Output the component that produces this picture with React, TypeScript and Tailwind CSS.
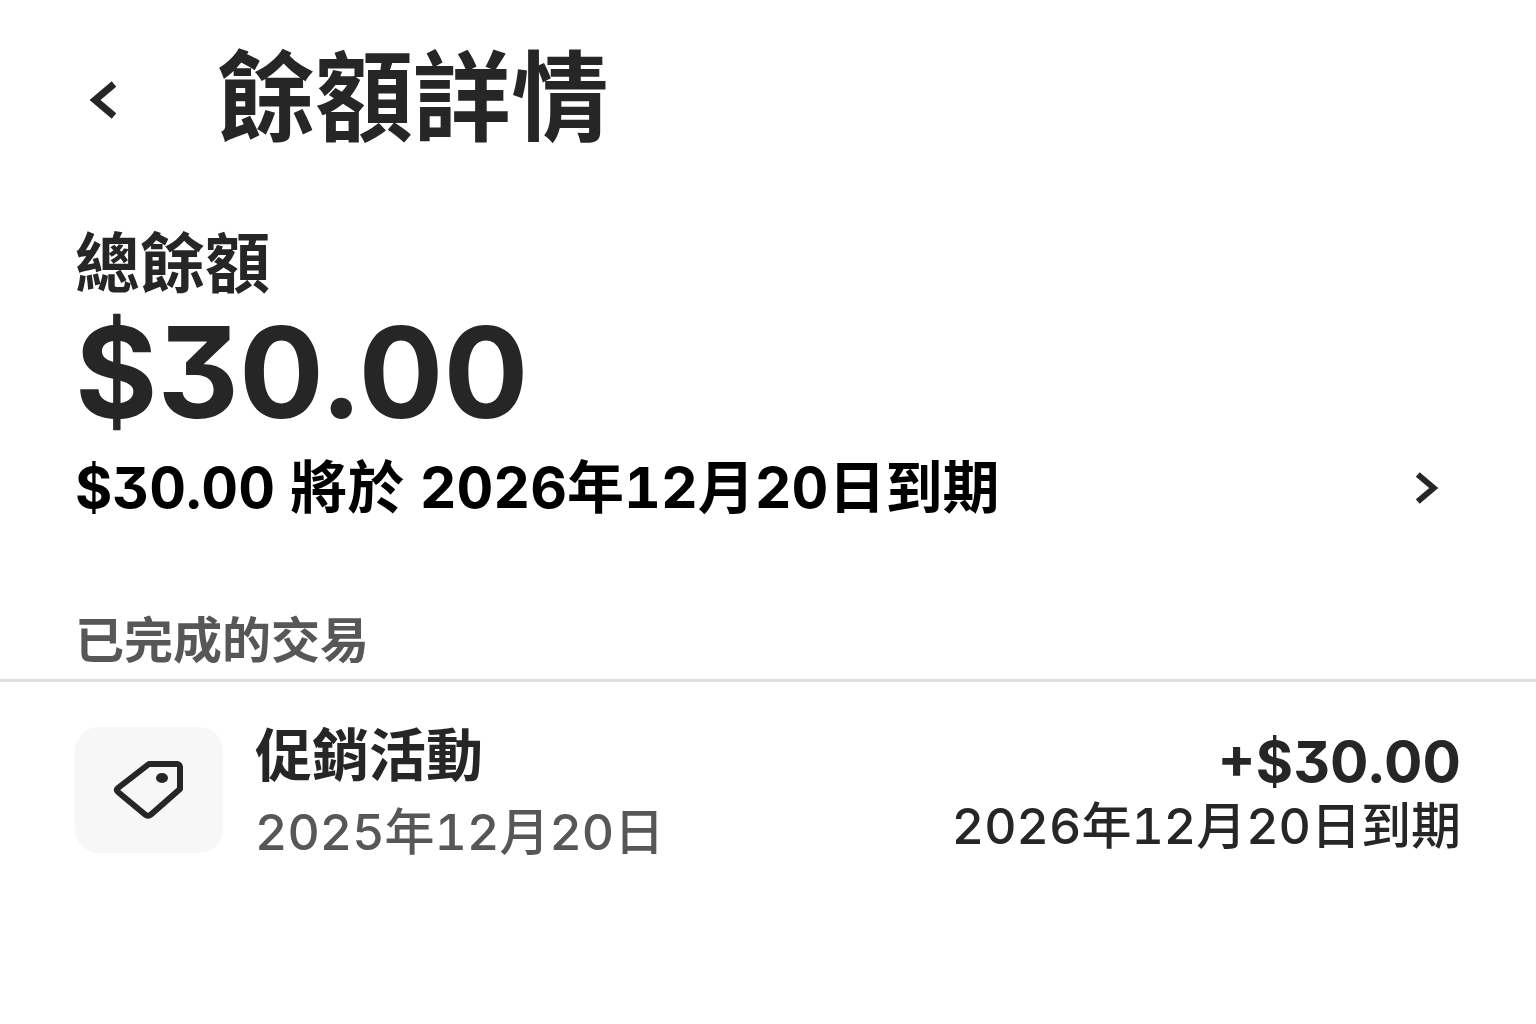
import type { ReactNode } from 'react';

interface Transaction {
  title: string;
  date: string;
  amount: string;
  expires: string;
}

const transactions: Transaction[] = [
  { title: '促銷活動', date: '2025年12月20日', amount: '+$30.00', expires: '2026年12月20日到期' },
];

function Chevron({ children, className }: { children: ReactNode; className: string }) {
  return (
    <svg
      viewBox="0 0 28 38"
      fill="none"
      stroke="#262626"
      strokeWidth="7"
      aria-hidden="true"
      className={className}
    >
      {children}
    </svg>
  );
}

function TagIcon() {
  return (
    <svg viewBox="0 0 72 60" fill="none" className="h-[60px] w-[72px]" aria-hidden="true">
      <path
        d="M36 4H64a3 3 0 0 1 3 3V29L38 54.500q-3 2.500-6 0L5 32q-2.500-2 0-4Z"
        stroke="#262626"
        strokeWidth="6"
        strokeLinejoin="round"
      />
      <ellipse cx="49" cy="18" rx="6" ry="5" fill="#262626" />
    </svg>
  );
}

function TransactionRow({ item }: { item: Transaction }) {
  return (
    <li className="flex items-center justify-between">
      <div className="flex items-center gap-8">
        <div className="flex h-[126px] w-[148px] items-center justify-center rounded-3xl bg-[#f7f7f7]">
          <TagIcon />
        </div>
        <div className="pt-2">
          <p className="text-[57px] leading-[76px] font-bold">{item.title}</p>
          <p className="text-[50px] leading-[76px] font-medium text-[#575757] [font-feature-settings:'tnum']">
            {item.date}
          </p>
        </div>
      </div>
      <div className="pt-2 text-right">
        <p className="text-[57px] leading-[64px] font-bold">{item.amount}</p>
        <p className="text-[50px] leading-[64px] font-medium [font-feature-settings:'tnum']">
          {item.expires}
        </p>
      </div>
    </li>
  );
}

export default function App() {
  return (
    <div
      lang="zh-Hant"
      className="min-h-screen bg-white font-['Inter','Noto_Sans_CJK_TC',sans-serif] text-[#262626] [font-feature-settings:'cv09']"
    >
      {/* Header */}
      <header className="flex items-center gap-[72px] px-[75px] pt-8">
        <button type="button" aria-label="返回" className="flex h-16 w-[70px] items-center pt-1 pl-3">
          <Chevron className="h-[38px] w-8">
            <path d="M25 3 6 19l19 16" />
          </Chevron>
        </button>
        <h1 className="text-[98px] leading-[132px] font-bold">餘額詳情</h1>
      </header>

      <main>
        {/* Balance */}
        <section className="px-[75px] pt-[62px]">
          <h2 className="text-[65px] leading-[76px] font-bold">總餘額</h2>
          <p className="text-[126px] leading-[140px] font-bold">$30.00</p>
          <button type="button" className="flex w-full items-center justify-between text-black">
            <span className="text-[57px] leading-[92px] font-bold [font-feature-settings:'cv09','tnum']">
              $30.00 將於 2026年12月20日到期
            </span>
            <Chevron className="mr-5 h-8 w-7">
              <path d="m3 3 19 16L3 35" />
            </Chevron>
          </button>
        </section>

        {/* Completed transactions */}
        <section>
          <h2 className="mt-[71px] border-b-[3px] border-[#dfdfdf] px-[75px] pb-[2px] text-[49px] leading-[72px] font-bold text-[#575757]">
            已完成的交易
          </h2>
          <ul className="px-[75px] pt-7">
            {transactions.map((item) => (
              <TransactionRow key={item.date} item={item} />
            ))}
          </ul>
        </section>
      </main>
    </div>
  );
}
